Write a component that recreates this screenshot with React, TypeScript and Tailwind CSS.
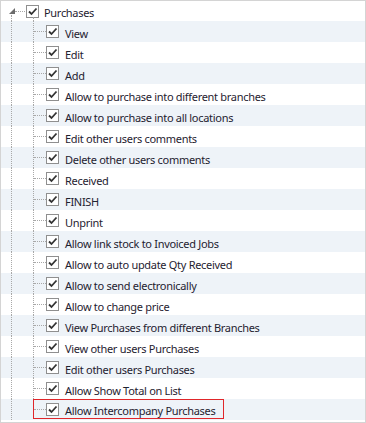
// Permissions tree: one parent node with checked child permissions

const items: string[] = [
  'View',
  'Edit',
  'Add',
  'Allow to purchase into different branches',
  'Allow to purchase into all locations',
  'Edit other users comments',
  'Delete other users comments',
  'Received',
  'FINISH',
  'Unprint',
  'Allow link stock to Invoiced Jobs',
  'Allow to auto update Qty Received',
  'Allow to send electronically',
  'Allow to change price',
  'View Purchases from different Branches',
  'View other users Purchases',
  'Edit other users Purchases',
  'Allow Show Total on List',
  'Allow Intercompany Purchases',
];

function CheckBox() {
  return (
    <span className="flex h-[13px] w-[13px] shrink-0 items-center justify-center border border-[#8f8f8f] bg-white">
      <svg width="11" height="11" viewBox="0 0 11 11">
        <path d="M2 5.5 L4.5 8 L9.5 2.5" fill="none" stroke="#333333" strokeWidth="1.8" />
      </svg>
    </span>
  );
}

function Label({ text }: { text: string }) {
  return <span className="whitespace-nowrap text-[11px] leading-none tracking-[-0.3px] text-[#1f2230]">{text}</span>;
}

function ChildRow({ text, highlighted }: { text: string; highlighted: boolean }) {
  return (
    <div className="flex h-[21px] items-stretch even:bg-[#eef3f8]">
      <div className="w-[11px] shrink-0 border-r border-dotted border-[#a8a8a8]" />
      {highlighted ? (
        <>
          <div className="w-[21px] shrink-0" />
          <div className="flex h-[20px] w-[191px] shrink-0 items-center border border-[#e0262a]">
            <div className="h-0 w-[12px] shrink-0 border-t border-dotted border-[#a8a8a8]" />
            <CheckBox />
            <span className="ml-[6px]">
              <Label text={text} />
            </span>
          </div>
        </>
      ) : (
        <>
          <div className="w-[22px] shrink-0 border-r border-dotted border-[#a8a8a8]" />
          <div className="flex items-center">
            <div className="h-0 w-[12px] shrink-0 border-t border-dotted border-[#a8a8a8]" />
            <CheckBox />
            <span className="ml-[6px]">
              <Label text={text} />
            </span>
          </div>
        </>
      )}
    </div>
  );
}

export default function App() {
  return (
    <div className="h-[423px] w-[366px] border border-[#d4d4d4] bg-white" style={{ fontFamily: '"Noto Sans", "Open Sans", sans-serif' }}>
      <div className="relative flex h-[20px] items-center">
        <div className="w-[8px] shrink-0" />
        <svg width="6" height="6" viewBox="0 0 6 6" className="shrink-0">
          <path d="M6 0 L6 6 L0 6 Z" fill="#6b6b6b" />
        </svg>
        <div className="h-0 w-[10px] shrink-0 border-t border-dotted border-[#a8a8a8]" />
        <div className="ml-px">
          <CheckBox />
        </div>
        <span className="ml-[5px]">
          <Label text="Purchases" />
        </span>
        <div className="absolute left-[10px] top-[14px] h-[6px] border-l border-dotted border-[#a8a8a8]" />
        <div className="absolute left-[32px] top-[16px] h-[4px] border-l border-dotted border-[#a8a8a8]" />
      </div>
      {items.map((t, i) => (
        <ChildRow key={t} text={t} highlighted={i === items.length - 1} />
      ))}
    </div>
  );
}
